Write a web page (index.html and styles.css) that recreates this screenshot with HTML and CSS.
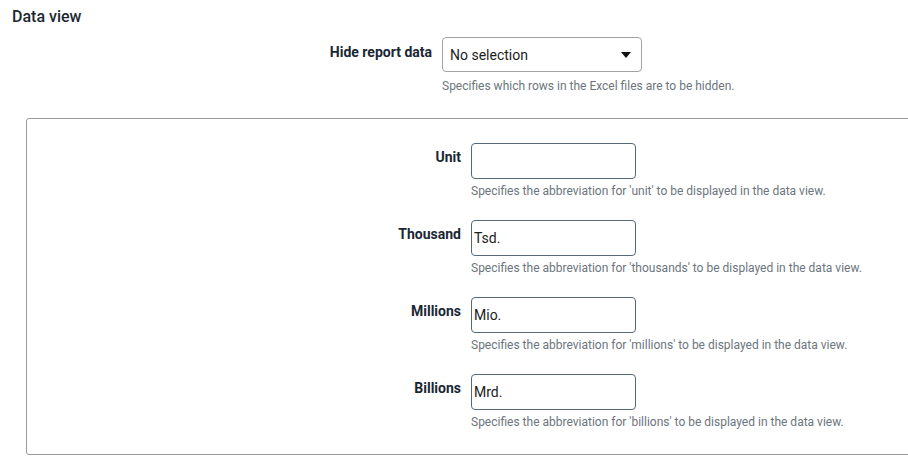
FILE: index.html
```html
<!DOCTYPE html>
<html lang="en">
<head>
<meta charset="utf-8">
<title>Data view</title>
<link rel="stylesheet" href="styles.css">
</head>
<body>
<h2 class="title">Data view</h2>
<div class="row top-row">
  <label class="label">Hide report data</label>
  <div class="field">
    <div class="select">
      <span class="select-value">No selection</span>
      <svg class="caret" width="10" height="6" viewBox="0 0 10 6"><path d="M0 0H10L5 6Z" fill="#111"/></svg>
    </div>
    <div class="help">Specifies which rows in the Excel files are to be hidden.</div>
  </div>
</div>
<div class="box">
  <div class="row box-row">
    <label class="label">Unit</label>
    <div class="field">
      <div class="input"></div>
      <div class="help">Specifies the abbreviation for 'unit' to be displayed in the data view.</div>
    </div>
  </div>
  <div class="row box-row">
    <label class="label">Thousand</label>
    <div class="field">
      <div class="input">Tsd.</div>
      <div class="help">Specifies the abbreviation for 'thousands' to be displayed in the data view.</div>
    </div>
  </div>
  <div class="row box-row">
    <label class="label">Millions</label>
    <div class="field">
      <div class="input">Mio.</div>
      <div class="help">Specifies the abbreviation for 'millions' to be displayed in the data view.</div>
    </div>
  </div>
  <div class="row box-row">
    <label class="label">Billions</label>
    <div class="field">
      <div class="input">Mrd.</div>
      <div class="help">Specifies the abbreviation for 'billions' to be displayed in the data view.</div>
    </div>
  </div>
</div>
</body>
</html>
```

FILE: styles.css
```css
html, body {
  margin: 0;
  padding: 0;
  overflow: hidden;
  background: #fff;
  font-family: Roboto, "Liberation Sans", sans-serif;
}
.title {
  margin: 0;
  padding: 7px 12px 0;
  font-size: 16px;
  line-height: 19px;
  font-weight: 500;
  color: #1b2733;
}
.row {
  display: grid;
  column-gap: 10px;
}
.top-row {
  grid-template-columns: 432px 1fr;
  margin-top: 11px;
}
.label {
  text-align: right;
  font-size: 14px;
  line-height: 17px;
  font-weight: 700;
  color: #1a2734;
  padding-top: 6px;
}
.top-row .label {
  padding-top: 7px;
}
.field {
  display: flex;
  flex-direction: column;
  align-items: flex-start;
}
.select {
  box-sizing: border-box;
  width: 200px;
  height: 35px;
  border: 1px solid #a3a3a3;
  border-radius: 4px;
  display: flex;
  align-items: center;
  justify-content: space-between;
  padding: 0 10px 0 7px;
  font-size: 14px;
  color: #1c1c1c;
}
.caret {
  display: block;
}
.help {
  margin-top: 7px;
  font-size: 12px;
  line-height: 14px;
  color: #6c757d;
  white-space: nowrap;
}
.box {
  margin: 25px -40px 0 26px;
  border: 1px solid #9a9a9a;
  border-radius: 3px;
  padding: 24px 0 25px;
  display: flex;
  flex-direction: column;
  row-gap: 22px;
}
.box-row {
  grid-template-columns: 434px 1fr;
}
.input {
  box-sizing: border-box;
  width: 165px;
  height: 36px;
  border: 1px solid #56687a;
  border-radius: 4px;
  padding: 0 2px;
  display: flex;
  align-items: center;
  font-size: 14px;
  color: #1c1c1c;
}
.box .help {
  margin-top: 5px;
}
```
